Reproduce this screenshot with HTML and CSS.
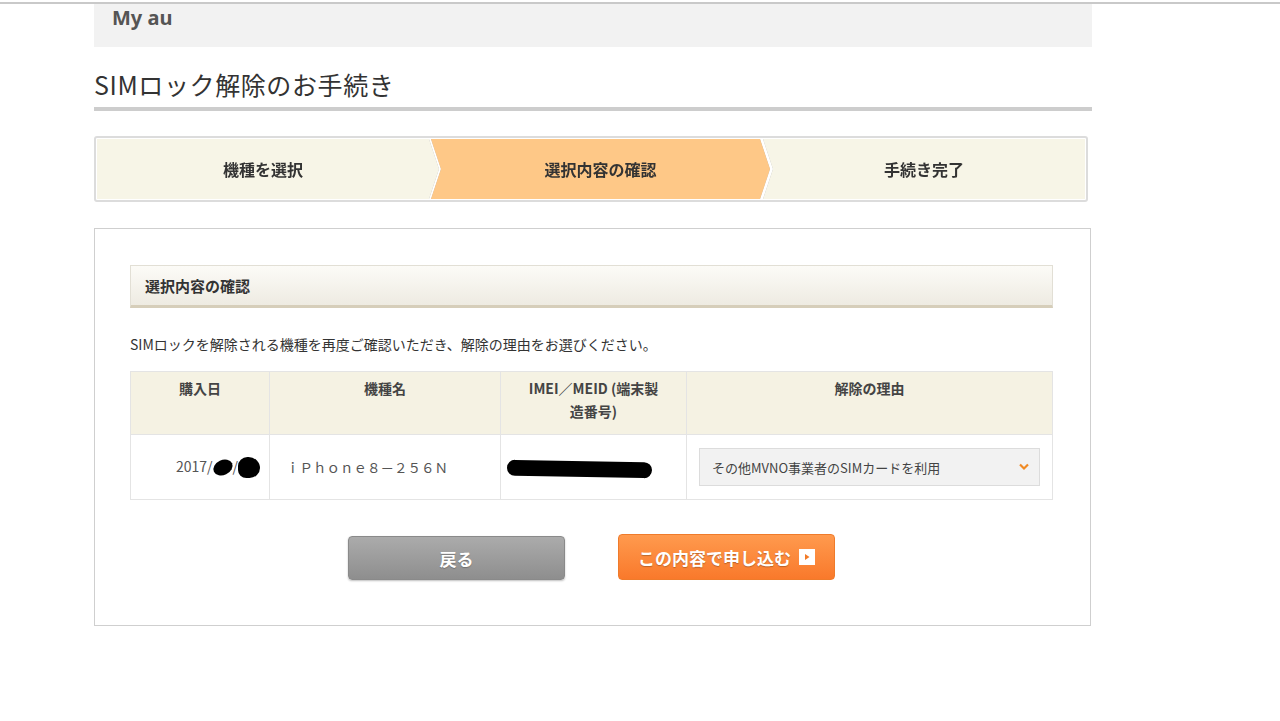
FILE: index.html
```html
<!DOCTYPE html>
<html lang="ja">
<head>
  <meta charset="UTF-8" />
  <title>SIMロック解除のお手続き | My au</title>
  <link rel="stylesheet" href="styles.css">
</head>
<body>
  <div class="site">
    <div class="wrap">

      <div class="brand">My au</div>

      <h1 class="page-title">SIMロック解除のお手続き</h1>

      <div class="steps">
        <div class="step-wrap first"><div class="step">機種を選択</div></div>
        <div class="step-wrap middle"><div class="step current">選択内容の確認</div></div>
        <div class="step-wrap last"><div class="step">手続き完了</div></div>
      </div>

      <div class="panel">
        <h2 class="panel-head">選択内容の確認</h2>
        <p class="lead">SIMロックを解除される機種を再度ご確認いただき、解除の理由をお選びください。</p>

        <table class="device-table">
          <thead>
            <tr>
              <th class="col-date">購入日</th>
              <th class="col-name">機種名</th>
              <th class="col-imei">IMEI／MEID (端末製造番号)</th>
              <th class="col-reason">解除の理由</th>
            </tr>
          </thead>
          <tbody>
            <tr>
              <td class="cell-date">2017/<span class="redact dot"></span>/<span class="redact blot"></span></td>
              <td class="cell-name">ｉＰｈｏｎｅ８－２５６Ｎ</td>
              <td class="cell-imei"><span class="redact bar"></span></td>
              <td class="cell-reason">
                <div class="select">
                  <span>その他MVNO事業者のSIMカードを利用</span>
                  <svg class="select-arrow" width="10" height="8" viewBox="0 0 10 8"><path d="M1 1.5 L5 5.5 L9 1.5" fill="none" stroke="#f08a24" stroke-width="2.2"/></svg>
                </div>
              </td>
            </tr>
          </tbody>
        </table>

        <div class="actions">
          <button class="btn btn-back">戻る</button>
          <button class="btn btn-apply">この内容で申し込む <span class="go"><svg width="8" height="8" viewBox="0 0 8 8"><path d="M2 1 L6.5 4 L2 7 Z" fill="#f27a26"/></svg></span></button>
        </div>
      </div>

    </div>
  </div>
</body>
</html>
```

FILE: styles.css
```css
body { margin: 0; padding-top: 2px; background: #fff; color: #333; font-family: "Noto Sans CJK JP", "Noto Sans", sans-serif; }
.site { border-top: 2px solid #c9c9c9; }
.wrap { width: 998px; margin-left: 94px; }

.brand { height: 43px; background: #f2f2f2; padding-left: 18px; font-family: "Noto Sans", sans-serif; font-weight: bold; font-size: 20px; line-height: 27px; color: #555; }

.page-title { margin: 19px 0 0; padding-bottom: 5px; border-bottom: 4px solid #cdcdcd; font-size: 25px; font-weight: normal; line-height: 36px; color: #333; letter-spacing: 0.6px; }

/* step indicator */
.steps { display: flex; width: 988px; margin-top: 25px; border: 2px solid #dcdcdc; border-radius: 3px; padding: 1px; background: #fff; }
.step-wrap { filter: drop-shadow(0 0 0.7px #b5b5b5); }
.step-wrap.first { width: 342px; }
.step-wrap.middle { width: 339px; margin-left: -8px; }
.step-wrap.last { flex: 1; margin-left: -7px; }
.step { height: 60px; display: flex; align-items: center; justify-content: center; background: #f7f5e7; font-size: 16px; font-weight: bold; color: #333; }
.first .step { clip-path: polygon(0 0, calc(100% - 10px) 0, 100% 50%, calc(100% - 10px) 100%, 0 100%); padding-right: 10px; }
.middle .step { clip-path: polygon(0 0, calc(100% - 10px) 0, 100% 50%, calc(100% - 10px) 100%, 0 100%, 10px 50%); }
.last .step { clip-path: polygon(0 0, 100% 0, 100% 100%, 0 100%, 10px 50%); }
.step.current { background: #fec887; }

/* main panel */
.panel { width: 923px; margin-top: 26px; border: 1px solid #cfcfcf; padding: 36px 37px 45px 35px; }
.panel-head { margin: 0; height: 39px; padding-left: 14px; border: 1px solid #e2dfd5; border-bottom: 3px solid #d6ceba; background: linear-gradient(#fcfbf7, #eeebe2); font-size: 15px; font-weight: bold; line-height: 39px; color: #333; }
.lead { margin: 26px 0 17px; font-size: 14px; line-height: 20px; color: #333; }

.device-table { width: 100%; border-collapse: collapse; font-size: 14px; }
.device-table th, .device-table td { border: 1px solid #e4e4e4; }
.device-table th { height: 57px; padding: 5px 10px 0; background: #f5f2e3; vertical-align: top; font-weight: bold; line-height: 23px; color: #444; }
.device-table th.col-imei { padding: 5px 22px 0; }
.device-table td { height: 62px; background: #fff; color: #555; }
.col-date { width: 118px; }
.col-name { width: 210px; }
.col-imei { width: 141px; }
.cell-date { text-align: right; padding-right: 9px; }
.cell-name { padding-left: 16px; font-size: 13.5px; }
.cell-imei { padding-left: 6px; }
.cell-reason { padding: 0 12px; }

.redact { display: inline-block; background: #000; vertical-align: middle; }
.redact.dot { width: 20px; height: 15px; border-radius: 50%; transform: rotate(-25deg); }
.redact.blot { width: 22px; height: 21px; border-radius: 45% 55% 50% 40%; }
.redact.bar { width: 145px; height: 16px; border-radius: 8px; transform: rotate(1deg); }

.select { height: 36px; display: flex; align-items: center; justify-content: space-between; padding: 0 10px 0 12px; background: #f2f2f2; border: 1px solid #dcdcdc; font-size: 13px; color: #444; }
.select-arrow { display: block; }

/* buttons */
.actions { display: flex; justify-content: center; align-items: center; gap: 53px; margin-top: 34px; }
.btn { width: 217px; border-radius: 4px; font-family: inherit; font-size: 17px; font-weight: bold; color: #fff; cursor: pointer; text-shadow: 0 1px 1px rgba(0,0,0,0.25); }
.btn-back { height: 44px; margin-top: 2px; border: 1px solid #8a8a8a; background: linear-gradient(#ababab, #8e8e8e); box-shadow: 0 1px 2px rgba(0,0,0,0.25); }
.btn-apply { height: 46px; border: 1px solid #ef7b2b; background: linear-gradient(#ff9a4e, #f9792b); display: flex; align-items: center; justify-content: center; gap: 8px; }
.go { width: 16px; height: 16px; background: #fff; display: flex; align-items: center; justify-content: center; }
.go svg { display: block; }
```
